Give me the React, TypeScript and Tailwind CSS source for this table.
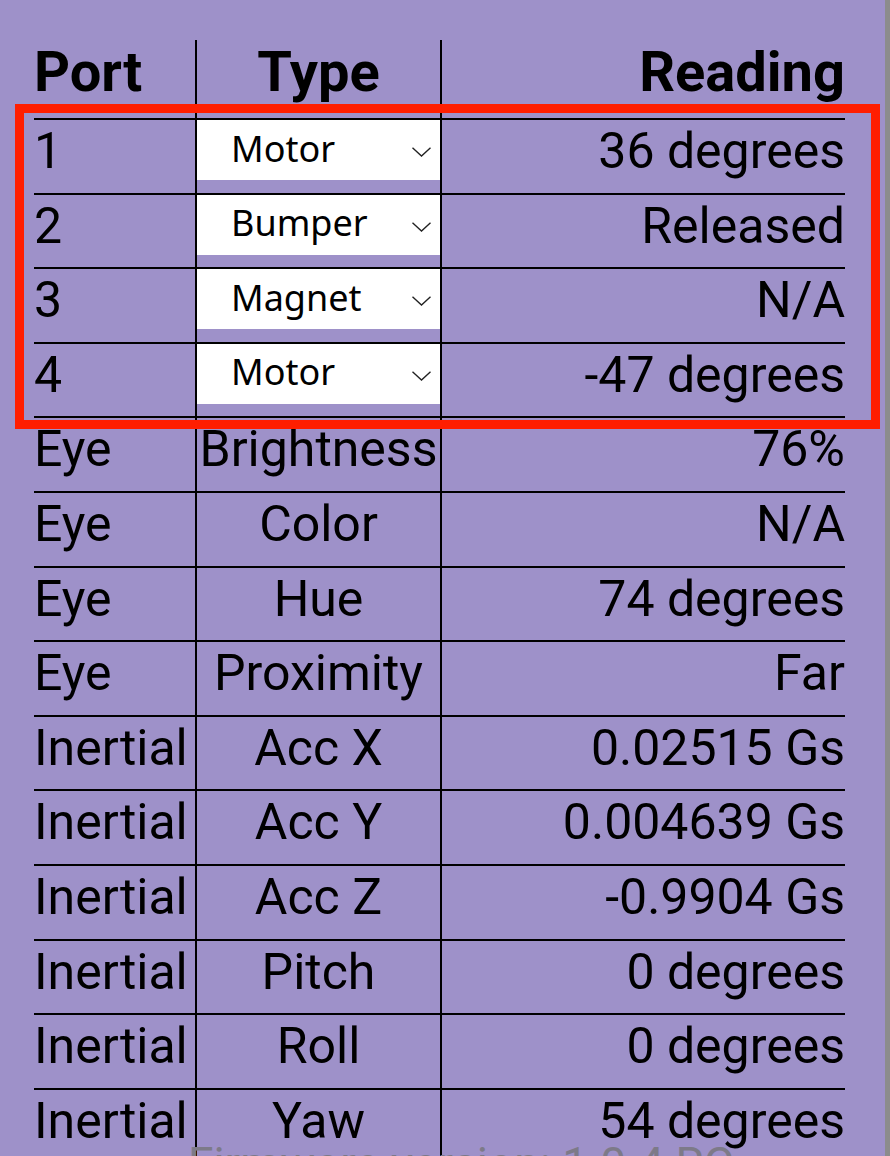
import { useState } from "react";

type Row = { port: string; type: string; reading: string; select?: boolean };

const rows: Row[] = [
  { port: "1", type: "Motor", reading: "36 degrees", select: true },
  { port: "2", type: "Bumper", reading: "Released", select: true },
  { port: "3", type: "Magnet", reading: "N/A", select: true },
  { port: "4", type: "Motor", reading: "-47 degrees", select: true },
  { port: "Eye", type: "Brightness", reading: "76%" },
  { port: "Eye", type: "Color", reading: "N/A" },
  { port: "Eye", type: "Hue", reading: "74 degrees" },
  { port: "Eye", type: "Proximity", reading: "Far" },
  { port: "Inertial", type: "Acc X", reading: "0.02515 Gs" },
  { port: "Inertial", type: "Acc Y", reading: "0.004639 Gs" },
  { port: "Inertial", type: "Acc Z", reading: "-0.9904 Gs" },
  { port: "Inertial", type: "Pitch", reading: "0 degrees" },
  { port: "Inertial", type: "Roll", reading: "0 degrees" },
  { port: "Inertial", type: "Yaw", reading: "54 degrees" },
];

const deviceTypes = ["Motor", "Bumper", "Magnet", "Light", "None"];

const TypeSelect = ({ initial }: { initial: string }) => {
  const [value, setValue] = useState(initial);
  return (
    <div className="relative h-[60px] w-full">
      <select
        value={value}
        onChange={(e) => setValue(e.target.value)}
        className="block h-[60px] w-full appearance-none rounded-none border-0 bg-white pb-[4px] pl-[34px] font-[family-name:'Noto_Sans',sans-serif] text-[36px] leading-[normal] text-black outline-none"
      >
        {deviceTypes.map((t) => (
          <option key={t}>{t}</option>
        ))}
      </select>
      <svg
        className="pointer-events-none absolute right-[9px] top-[27px]"
        width="19"
        height="10"
        viewBox="0 0 19 10"
        fill="none"
      >
        <path d="M0.5 0.8 L9.5 9 L18.5 0.8" stroke="#222" strokeWidth="1.4" />
      </svg>
    </div>
  );
};

const App = () => {
  return (
    <div className="relative flex h-[1156px] w-full overflow-hidden bg-[#9e91c9] font-[family-name:Roboto,sans-serif] text-black">
      <div className="flex-1 pl-[34px] pt-[40px]">
        <div className="w-[811px]">
          {/* Header */}
          <div className="grid h-[78px] grid-cols-[161px_247px_403px] text-[56px] font-bold leading-[58px]">
            <div className="pt-[3px]">Port</div>
            <div className="border-x-2 border-black pt-[3px] text-center">Type</div>
            <div className="pt-[3px] text-right">Reading</div>
          </div>

          {/* Rows */}
          {rows.map((r, i) => (
            <div
              key={i}
              className="grid h-[74.6px] grid-cols-[161px_247px_403px] border-t-2 border-black text-[50px] leading-[58px]"
            >
              <div className="pt-[2px] whitespace-nowrap">{r.port}</div>
              <div className="border-x-2 border-black text-center whitespace-nowrap">
                {r.select ? <TypeSelect initial={r.type} /> : <div className="pt-[2px]">{r.type}</div>}
              </div>
              <div className="pt-[2px] text-right whitespace-nowrap">{r.reading}</div>
            </div>
          ))}
        </div>
      </div>

      {/* scroll indicator */}
      <div className="w-[5px] shrink-0 bg-[#8c8c8c]" />

      {/* footer */}
      <div className="absolute left-[188px] top-[1137px] whitespace-nowrap text-[46px] leading-[54px] text-[#7d7a88]">
        Firmware version: 1.0.4 RC
      </div>

      {/* highlight */}
      <div className="pointer-events-none absolute left-[15px] top-[104px] h-[325px] w-[865px] border-[9px] border-[#ff1e00]" />
    </div>
  );
};

export default App;
